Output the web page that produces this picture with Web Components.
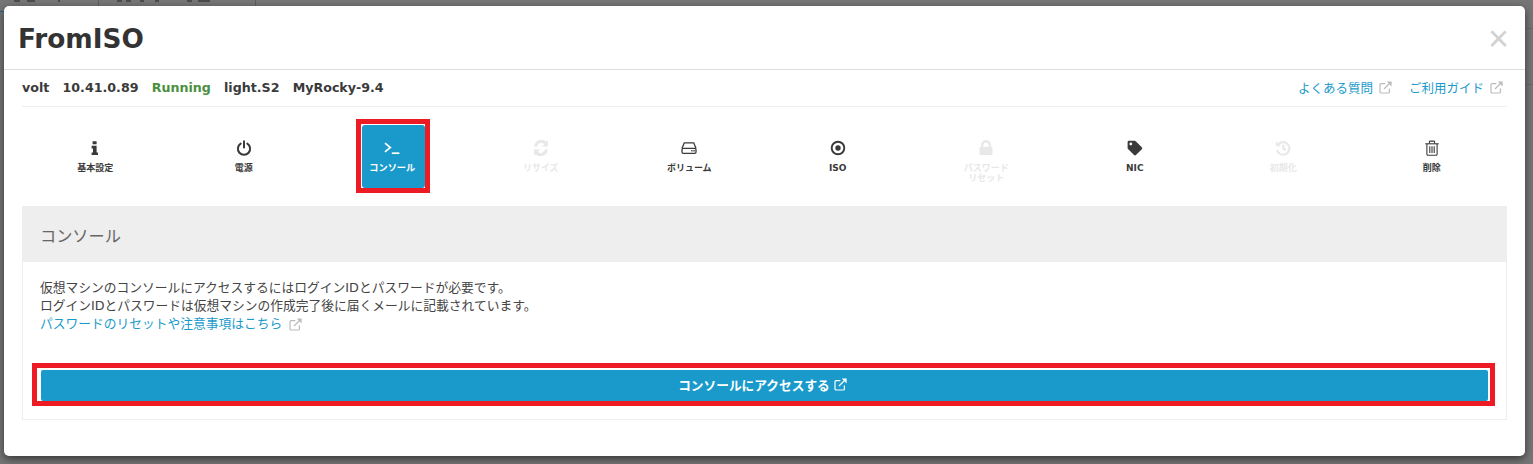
<!DOCTYPE html>
<html lang="ja">
<head>
<meta charset="utf-8">
<title>FromISO</title>
<style>
    html, body {
        margin: 0;
        height: 464px;
        overflow: hidden;
        background: #767676;
    }
    body {
        color: #333;
        font-family: "DejaVu Sans", "Noto Sans CJK JP", sans-serif;
    }
</style>
</head>
<body>
<page-backdrop></page-backdrop>
<app-modal heading="FromISO">
    <info-bar slot="info">
        <span>volt</span>
        <span>10.41.0.89</span>
        <span class="ok">Running</span>
        <span>light.S2</span>
        <span>MyRocky-9.4</span>
        <ext-link slot="links" href="#">よくある質問</ext-link>
        <ext-link slot="links" href="#">ご利用ガイド</ext-link>
    </info-bar>
    <action-nav>
        <action-item icon="info">基本設定</action-item>
        <action-item icon="power">電源</action-item>
        <action-item icon="console" active>コンソール</action-item>
        <action-item icon="sync" disabled>リサイズ</action-item>
        <action-item icon="hdd">ボリューム</action-item>
        <action-item icon="disc">ISO</action-item>
        <action-item icon="lock" disabled>パスワード<br>リセット</action-item>
        <action-item icon="tag">NIC</action-item>
        <action-item icon="history" disabled>初期化</action-item>
        <action-item icon="trash">削除</action-item>
    </action-nav>
    <console-panel heading="コンソール" action="コンソールにアクセスする">
        仮想マシンのコンソールにアクセスするにはログインIDとパスワードが必要です。<br>
        ログインIDとパスワードは仮想マシンの作成完了後に届くメールに記載されています。<br>
        <ext-link href="#" wide>パスワードのリセットや注意事項はこちら</ext-link>
    </console-panel>
</app-modal>

<script>
const ICONS = {
    info: `<path fill="currentColor" d="M5.6 1.200h4v3h-4zM4.600 5.800h5v6.600h1.400v2.600H4.600v-2.600H6V8.400H4.600z"/>`,
    power: `<g fill="none" stroke="currentColor" stroke-width="2" stroke-linecap="round"><path d="M4.700 3.600a6.100 6.100 0 1 0 6.600 0"/><path d="M8 1.300v6.200"/></g>`,
    console: `<g fill="none" stroke="currentColor" stroke-width="1.700"><path d="M1 3.200l5.300 4.300L1 11.800"/><path d="M7.800 13.200h7.600"/></g>`,
    sync: `<path fill="currentColor" d="M13.200 1.700l1.800-1.200v6h-6l2.200-2.200A4.300 4.300 0 0 0 4 6.700H1.300a7 7 0 0 1 11.900-5zM2.800 14.300L1 15.500v-6h6l-2.200 2.200A4.300 4.300 0 0 0 12 9.300h2.700a7 7 0 0 1-11.900 5z"/>`,
    hdd: `<g fill="none" stroke="currentColor" stroke-width="1.300"><path d="M1 8.300L3.300 2.800h9.400L15 8.300"/><rect x="1" y="8.300" width="14" height="5" rx="1.200"/></g><path fill="currentColor" d="M10.300 10.100h1.300v1.400h-1.300zM12.400 10.100h1.300v1.400h-1.300z"/>`,
    disc: `<circle cx="8" cy="8" r="6.300" fill="none" stroke="currentColor" stroke-width="1.900"/><circle cx="8" cy="8" r="2.700" fill="currentColor"/>`,
    lock: `<path fill="currentColor" d="M3 7V5a5 5 0 0 1 10 0v2h.6c.500 0 .900.400.900.900v6.200c0 .500-.400.900-.900.900H2.400a.9.900 0 0 1-.900-.900V7.900c0-.500.400-.900.900-.900zm2.400 0h5.200V5a2.600 2.600 0 0 0-5.200 0z"/>`,
    tag: `<path fill="currentColor" transform="translate(.6 .8) scale(.0285)" d="M0 252.118V48C0 21.490 21.490 0 48 0h204.118a48 48 0 0 1 33.941 14.059l211.882 211.882c18.745 18.745 18.745 49.137 0 67.882L293.823 497.941c-18.745 18.745-49.137 18.745-67.882 0L14.059 286.059A48 48 0 0 1 0 252.118zM112 64c-26.510 0-48 21.490-48 48s21.490 48 48 48 48-21.490 48-48-21.490-48-48-48z"/>`,
    history: `<g fill="none" stroke="currentColor" stroke-width="2.200"><path d="M3.400 4.200A6.300 6.300 0 1 1 2 10"/><path d="M8.300 4.800v3.700l2.700 1.500"/></g><path fill="currentColor" d="M1 1.300l5 5H1z"/>`,
    trash: `<g fill="none" stroke="currentColor" stroke-width="1.100"><path d="M2.900 4v10.300c0 .6.400 1 1 1h8.200c.6 0 1-.4 1-1V4"/><path d="M1.300 3.800h13.400"/><path d="M5.400 3.600V1.800c0-.4.300-.7.700-.7h3.800c.4 0 .7.300.7.700v1.800"/><path d="M5.800 6.200v6.800M8 6.200v6.800M10.200 6.200v6.800"/></g>`
};

// little box with an arrow, used after every link going out of the page
class ExtIcon extends HTMLElement {
    constructor() {
        super();
        this.attachShadow({mode: 'open'}).innerHTML = `
            <style>
                :host { display: inline-flex; color: inherit; }
                svg { width: 13px; height: 13px; display: block; }
            </style>
            <svg viewBox="0 0 13 13" fill="none" stroke="currentColor" stroke-width="1.200">
                <path d="M10.400 7.600v3.300c0 .6-.5 1.100-1.100 1.100H2.100c-.6 0-1.100-.5-1.100-1.100V3.700c0-.6.500-1.100 1.100-1.100h4.200"/>
                <path d="M5 8l6-6"/>
                <path fill="currentColor" stroke="none" d="M7.800.6h4.800v4.800z"/>
            </svg>`;
    }
}
customElements.define('ext-icon', ExtIcon);

class ExtLink extends HTMLElement {
    constructor() {
        super();
        this.attachShadow({mode: 'open'}).innerHTML = `
            <style>
                :host { display: inline-flex; align-items: center; gap: 6px; }
                :host([wide]) { gap: 7px; }
                a { color: #1a9acb; text-decoration: none; }
                ext-icon { color: #bbb; }
            </style>
            <a href="#"><slot></slot></a>
            <ext-icon></ext-icon>`;
    }
}
customElements.define('ext-link', ExtLink);

// what shows of the page behind the dialog: only dim smudges and rules
class PageBackdrop extends HTMLElement {
    constructor() {
        super();
        const marks = [[14, 6], [27, 8], [58, 2], [117, 5], [126, 5], [140, 4], [155, 4], [187, 5], [198, 12]];
        const layers = marks.map(([x, w]) =>
            `linear-gradient(#4c4c4c, #4c4c4c) ${x}px 0 / ${w}px 2px no-repeat`);
        layers.push(
            'linear-gradient(#5f5f5f, #5f5f5f) 98px 0 / 1px 6px no-repeat',
            'linear-gradient(#5f5f5f, #5f5f5f) 255px 0 / 1px 6px no-repeat',
            'linear-gradient(#1a6a8a, #1a6a8a) 0 11px / 4px 1px no-repeat',
            'linear-gradient(#6a6a6a, #6a6a6a) 1525px 28px / 8px 1px no-repeat',
            'linear-gradient(#6a6a6a, #6a6a6a) 1525px 84px / 8px 1px no-repeat'
        );
        this.attachShadow({mode: 'open'}).innerHTML = `
            <style>
                :host {
                    position: absolute;
                    inset: 0;
                    display: block;
                    background: ${layers.join(',')};
                }
            </style>`;
    }
}
customElements.define('page-backdrop', PageBackdrop);

class AppModal extends HTMLElement {
    constructor() {
        super();
        this.attachShadow({mode: 'open'}).innerHTML = `
            <style>
                :host {
                    position: absolute;
                    left: 4px;
                    top: 6px;
                    width: 1521px;
                    height: 450px;
                    display: block;
                    box-sizing: border-box;
                    background: #fff;
                    border-radius: 5px;
                    box-shadow: 0 3px 9px rgba(0,0,0,.55);
                }
                header {
                    height: 64px;
                    box-sizing: border-box;
                    border-bottom: 1px solid #ddd;
                    padding: 2px 18px 0 14px;
                    display: flex;
                    align-items: center;
                    justify-content: space-between;
                }
                h1 {
                    margin: 0;
                    font-size: 26.300px;
                    font-weight: 700;
                    color: #333;
                }
                .close {
                    font: 36px/1 "Liberation Sans", sans-serif;
                    color: #d2d2d2;
                    margin-right: -2px;
                }
                main { padding: 0 18px; }
            </style>
            <header>
                <h1></h1>
                <span class="close">×</span>
            </header>
            <main>
                <slot name="info"></slot>
                <slot></slot>
            </main>`;
    }
    connectedCallback() {
        this.shadowRoot.querySelector('h1').textContent = this.getAttribute('heading');
    }
}
customElements.define('app-modal', AppModal);

class InfoBar extends HTMLElement {
    constructor() {
        super();
        this.attachShadow({mode: 'open'}).innerHTML = `
            <style>
                :host {
                    height: 37px;
                    box-sizing: border-box;
                    border-bottom: 1px solid #eee;
                    padding: 0 4px 2px 0;
                    display: flex;
                    align-items: center;
                    justify-content: space-between;
                }
                .facts {
                    display: flex;
                    gap: 13.200px;
                    font-size: 12.650px;
                    font-weight: 700;
                    color: #3a3a3a;
                }
                .links {
                    display: flex;
                    gap: 17px;
                    font-size: 12.500px;
                }
                ::slotted(.ok) { color: #4a9040; }
            </style>
            <div class="facts"><slot></slot></div>
            <div class="links"><slot name="links"></slot></div>`;
    }
}
customElements.define('info-bar', InfoBar);

class ActionNav extends HTMLElement {
    constructor() {
        super();
        this.attachShadow({mode: 'open'}).innerHTML = `
            <style>
                :host {
                    display: grid;
                    grid-template-columns: repeat(10, 1fr);
                    justify-items: center;
                    padding: 18px 0;
                    height: 99px;
                    box-sizing: border-box;
                }
            </style>
            <slot></slot>`;
    }
}
customElements.define('action-nav', ActionNav);

class ActionItem extends HTMLElement {
    constructor() {
        super();
        this.attachShadow({mode: 'open'}).innerHTML = `
            <style>
                :host {
                    position: relative;
                    width: 63px;
                    height: 63px;
                    display: flex;
                    flex-direction: column;
                    align-items: center;
                    box-sizing: border-box;
                    padding: 15px 2px 0 0;
                    border-radius: 3px;
                    color: #3a3a3a;
                    font-size: 9px;
                    font-weight: 700;
                    line-height: 10px;
                    text-align: center;
                    white-space: nowrap;
                }
                :host([disabled]) { color: #e8e8e8; }
                :host([active]) { background: #1a9acb; color: #fff; font-size: 9.200px; }
                :host([active])::after {
                    content: "";
                    position: absolute;
                    inset: -6px -5px -5px -6px;
                    border: 5px solid #ed1c24;
                    pointer-events: none;
                }
                svg { width: 16px; height: 16px; display: block; margin-bottom: 7px; }
            </style>
            <svg viewBox="0 0 16 16"></svg>
            <div><slot></slot></div>`;
    }
    connectedCallback() {
        this.shadowRoot.querySelector('svg').innerHTML = ICONS[this.getAttribute('icon')];
    }
}
customElements.define('action-item', ActionItem);

class ConsolePanel extends HTMLElement {
    constructor() {
        super();
        this.attachShadow({mode: 'open'}).innerHTML = `
            <style>
                :host {
                    display: block;
                    height: 214px;
                    box-sizing: border-box;
                    border: 1px solid #eee;
                }
                .head {
                    height: 56px;
                    margin: -1px -1px 0;
                    padding: 2px 18px 0;
                    box-sizing: border-box;
                    display: flex;
                    align-items: center;
                    background: #eee;
                    color: #666;
                    font-size: 16.200px;
                }
                .body { padding: 17px 18px 18px; }
                .text {
                    font-size: 12.750px;
                    line-height: 18px;
                    height: 91px;
                    margin-left: -1px;
                    color: #444;
                }
                .text ::slotted(*) { vertical-align: top; }
                .go-wrap { position: relative; }
                .go-wrap::after {
                    content: "";
                    position: absolute;
                    inset: -7px -7px -5px -9px;
                    border: 5px solid #ed1c24;
                    pointer-events: none;
                }
                .go {
                    height: 31px;
                    box-sizing: border-box;
                    padding: 0 4px 3px 0;
                    display: flex;
                    align-items: center;
                    justify-content: center;
                    gap: 4px;
                    border-radius: 2px;
                    background: #1a9acb;
                    color: #fff;
                    font-size: 12.700px;
                    font-weight: 700;
                }
            </style>
            <div class="head"></div>
            <div class="body">
                <div class="text"><slot></slot></div>
                <div class="go-wrap">
                    <div class="go"><span class="label"></span><ext-icon></ext-icon></div>
                </div>
            </div>`;
    }
    connectedCallback() {
        this.shadowRoot.querySelector('.head').textContent = this.getAttribute('heading');
        this.shadowRoot.querySelector('.label').textContent = this.getAttribute('action');
    }
}
customElements.define('console-panel', ConsolePanel);
</script>
</body>
</html>
